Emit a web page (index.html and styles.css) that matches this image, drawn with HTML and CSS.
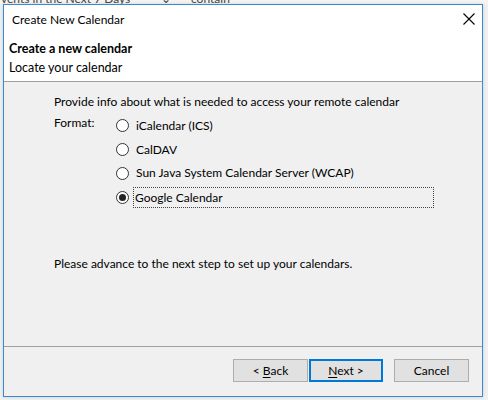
FILE: index.html
```html
<!DOCTYPE html>
<html>
<head>
<meta charset="utf-8">
<link rel="stylesheet" href="styles.css">
</head>
<body>
<div class="backdrop-top"><div class="backdrop-line"><span class="bt-a">vents in the Next 7 Days</span><span class="bt-chev">&#8964;</span><span class="bt-b">contain</span></div></div>
<div class="stage">
  <div class="dialog">
    <div class="titlebar">
      <span class="title">Create New Calendar</span>
      <svg class="close" width="12" height="12" viewBox="0 0 12 12"><path d="M0.5 0.5L11.5 11.5M11.5 0.5L0.5 11.5" stroke="#000" stroke-width="1.1" fill="none"/></svg>
    </div>
    <div class="header">
      <div class="h-title">Create a new calendar</div>
      <div class="h-sub">Locate your calendar</div>
    </div>
    <div class="body">
      <div class="intro">Provide info about what is needed to access your remote calendar</div>
      <div class="format">
        <div class="f-label">Format:</div>
        <div class="options">
          <div class="opt"><span class="radio"></span><span class="lbl">iCalendar (ICS)</span></div>
          <div class="opt"><span class="radio"></span><span class="lbl">CalDAV</span></div>
          <div class="opt"><span class="radio"></span><span class="lbl">Sun Java System Calendar Server (WCAP)</span></div>
          <div class="opt sel"><span class="radio on"></span><span class="lbl focus">Google Calendar</span></div>
        </div>
      </div>
      <div class="advance">Please advance to the next step to set up your calendars.</div>
    </div>
    <div class="footer">
      <button class="btn">&lt; <u>B</u>ack</button>
      <button class="btn default"><u>N</u>ext &gt;</button>
      <button class="btn cancel">Cancel</button>
    </div>
  </div>
</div>
</body>
</html>
```
FILE: styles.css
```css
html, body {
  margin: 0;
  padding: 0;
  width: 488px;
  height: 400px;
  overflow: hidden;
  background: #eef0f2;
  font-family: "Lato", "Noto Sans", sans-serif;
  font-size: 12px;
  color: #000;
}
.backdrop-top {
  height: 4px;
  overflow: hidden;
  background: #f4f4f4;
}
.backdrop-line {
  margin-top: -8px;
  height: 12px;
  display: flex;
  align-items: center;
  color: #444;
  white-space: nowrap;
}
.bt-a { margin-left: 1px; width: 160px; }
.bt-chev { width: 30px; }
.stage {
  padding: 0 5px 3px 3px;
}
.dialog {
  border: 1px solid #3a8bd2;
  height: 391px;
  display: flex;
  flex-direction: column;
  background: #f0f0f0;
  box-shadow: 0 0 3px rgba(0,0,0,0.15);
}
.titlebar {
  height: 29px;
  background: #fff;
  display: flex;
  align-items: center;
  justify-content: space-between;
  padding: 0 7px 0 8px;
}
.close { margin-top: -1px; }
.header {
  background: #fff;
  height: 47px;
  padding: 0 0 0 5px;
  border-bottom: 1px solid #a0a0a0;
}
.h-title {
  font-weight: bold;
  font-size: 12.5px;
  height: 19px;
  line-height: 19px;
  padding-top: 5px;
}
.h-sub {
  font-size: 12.5px;
  height: 19px;
  line-height: 19px;
}
.body {
  flex: 1;
  padding: 12px 0 0 50px;
}
.intro { line-height: 16px; height: 16px; }
.format {
  display: flex;
  margin-top: 5px;
}
.f-label { width: 62px; line-height: 16px; }
.options { display: flex; flex-direction: column; margin-top: -1px; }
.opt {
  display: flex;
  align-items: center;
  height: 23.8px;
}
.radio {
  width: 11px;
  height: 11px;
  border: 1px solid #333;
  border-radius: 50%;
  background: #fff;
  box-sizing: content-box;
  display: inline-flex;
  align-items: center;
  justify-content: center;
  margin-right: 7px;
}
.radio.on::after {
  content: "";
  width: 7px;
  height: 7px;
  border-radius: 50%;
  background: #222;
}
.lbl { line-height: 16px; }
.focus {
  outline: 1px dotted #444;
  width: 298px;
  padding: 2px 0 1px 1px;
  margin-left: -2px;
}
.advance {
  margin-top: 47px;
  line-height: 16px;
}
.footer {
  border-top: 1px solid #a0a0a0;
  height: 50px;
  display: flex;
  align-items: flex-start;
  justify-content: flex-end;
  padding: 12px 13px 0 0;
  box-sizing: border-box;
}
.btn {
  width: 75px;
  height: 23px;
  background: #e1e1e1;
  border: 1px solid #adadad;
  font: inherit;
  color: #000;
  padding: 0;
  margin: 0 0 0 1px;
}
.btn u { text-decoration: underline; text-underline-offset: 2px; }
.btn.default {
  border: 2px solid #0078d7;
  width: 74px;
}
.btn.cancel { margin-left: 11px; }
```
